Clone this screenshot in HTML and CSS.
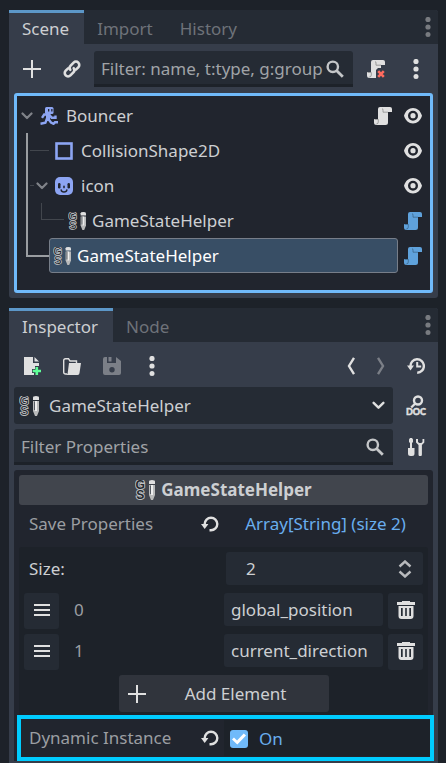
FILE: index.html
```html
<!DOCTYPE html>
<html lang="en">
<head>
<meta charset="utf-8">
<title>Scene and Inspector</title>
<link rel="stylesheet" href="styles.css">
</head>
<body>
<svg class="sprite" aria-hidden="true">
  <symbol id="plus" viewBox="0 0 18 18"><path fill="currentColor" d="M8 0h2v8h8v2h-8v8H8v-8H0V8h8z"/></symbol>
  <symbol id="link" viewBox="0 0 18 18"><g fill="none" stroke="currentColor" stroke-width="2.6" stroke-linecap="round" stroke-linejoin="round"><path d="M7.3 9.8a3.2 3.2 0 0 1 .3-4.2l3-3a3.3 3.3 0 0 1 4.7 4.7l-2.4 2.4"/><path d="M10.7 8.2a3.2 3.2 0 0 1-.3 4.2l-3 3a3.3 3.3 0 0 1-4.7-4.7l2.4-2.4"/></g></symbol>
  <symbol id="search" viewBox="0 0 18 18"><g fill="none" stroke="currentColor" stroke-width="2.4"><circle cx="6.800" cy="6.800" r="5.200"/><path stroke-width="2.8" d="m10.500 10.500 6.300 6.300"/></g></symbol>
  <symbol id="dots" viewBox="0 0 6 20"><g fill="currentColor"><circle cx="3" cy="2.500" r="2.600"/><circle cx="3" cy="10" r="2.600"/><circle cx="3" cy="17.500" r="2.500"/></g></symbol>
  <symbol id="script" viewBox="0 0 18 18"><path fill="currentColor" d="M6 0h10a2 2 0 0 1 2 2v3h-4v10.500a2.500 2.500 0 0 1-2.500 2.500H2.500A2.500 2.500 0 0 1 0 15.500V12h4V2a2 2 0 0 1 2-2z"/><path fill="none" stroke="#000" stroke-opacity=".28" stroke-width="1" d="M.5 12.500h3.800V15a2 2 0 0 1-2 2M8 1.300A2 2 0 0 1 9 3v2.200h5"/></symbol>
  <symbol id="eye" viewBox="0 0 18 18"><path fill="currentColor" fill-rule="evenodd" d="M9 1c4.200 0 7.500 2.800 9 7.700-1.500 4.900-4.800 7.700-9 7.700S1.500 13.600 0 8.700C1.500 3.800 4.800 1 9 1zM9 3.700a5 5 0 1 0 0 10 5 5 0 0 0 0-10zm0 2.400a2.600 2.600 0 1 1 0 5.200 2.600 2.600 0 0 1 0-5.200z"/></symbol>
  <symbol id="chevron" viewBox="0 0 12 8"><path fill="none" stroke="currentColor" stroke-width="2.200" stroke-linecap="round" stroke-linejoin="round" d="m1.500 1.500 4.500 4.500 4.500-4.500"/></symbol>
  <symbol id="runner" viewBox="0 0 18 18"><rect x="5" y="0" width="8.500" height="7" rx="1.500" fill="currentColor"/><path fill="#21252e" d="M8 2h1.300v2.500H8zM11.200 2h1.300v2.500h-1.300z"/><path fill="currentColor" d="M6 6.500h4.500l-.5 6-4-.5z"/><g fill="none" stroke="currentColor" stroke-width="2.400"><path d="M7 7.500H4.200L2 10.800M9.500 8l2.200 2.800h3.800V8.500"/><path d="M7 11.500l-1.600 4.300-4.900.9M8 11.500l3 4 2.500 1.300 1.500-1.500h3"/></g></symbol>
  <symbol id="face" viewBox="0 0 18 18"><rect width="18" height="18" rx="5" fill="currentColor"/><g fill="#21252e"><rect x="3" y="6" width="2.500" height="5.500" rx="1.200"/><rect x="12.500" y="6" width="2.500" height="5.500" rx="1.200"/></g><path fill="none" stroke="#21252e" stroke-width="1.600" stroke-linecap="round" d="M6.200 13c.4 2.600 5.200 2.600 5.600 0M9 9.200v1.400"/></symbol>
  <symbol id="helper" viewBox="0 0 20 20"><g fill="#24282f" stroke="#bfc0c2" stroke-width="1.800" paint-order="stroke" font-family="Liberation Sans" font-size="12"><text x=".6" y="9">G</text><text x="1.300" y="19">S</text></g><path fill="#e0e0e0" d="M14 1.500Q14 0 17 0t3 1.500V4h-6z"/><path fill="#b9babb" d="M14 5h6v10l-2 5h-2l-2-5z"/><path fill="#eee" d="M16 5h2v10h-2z"/><path fill="#555a62" d="M15 5.500h1V14h-1z"/></symbol>
  <symbol id="undo" viewBox="0 0 18 18"><path fill="none" stroke="currentColor" stroke-width="2.400" d="M3.700 10.500V9a6.300 6.300 0 1 1 6.300 6.300H8.500"/><path fill="currentColor" d="M0 9h7.400l-3.700 5z"/></symbol>
  <symbol id="history" viewBox="0 0 18 18"><path fill="none" stroke="currentColor" stroke-width="2.400" d="M3.500 9.500a6.700 6.700 0 1 1 6.700 6.200"/><path fill="currentColor" d="M0 8.500h7l-3.500 5zM9.200 5h2v3.500h3v2h-5z"/></symbol>
  <symbol id="trash" viewBox="0 0 18 18"><path fill="currentColor" fill-rule="evenodd" d="M5 0h8v1h5v3H0V1h5zM1.500 5h15v10a3 3 0 0 1-3 3h-9a3 3 0 0 1-3-3zM4 7v8h1.700V7zm4.200 0v8h1.600V7zm4.100 0v8H14V7z"/></symbol>
</svg>

<section class="dock" aria-label="Scene">
  <nav class="tabs">
    <button class="tab active">Scene</button><button class="tab">Import</button><button class="tab">History</button>
    <button class="more" aria-label="Dock options"><svg class="dots"><use href="#dots"/></svg></button>
  </nav>
  <div class="toolbar">
    <button class="tool" aria-label="Add node"><svg class="icon"><use href="#plus"/></svg></button>
    <button class="tool" aria-label="Instance scene"><svg class="icon"><use href="#link"/></svg></button>
    <label class="field"><input type="text" aria-label="Filter nodes" placeholder="Filter: name, t:type, g:group"><svg class="icon"><use href="#search"/></svg></label>
    <button class="tool detach" aria-label="Detach script"><svg class="icon" viewBox="0 0 18 18"><path fill="#e0e0e0" d="M6 0h10a2 2 0 0 1 2 2v3h-4v3h-3l-2 2v8H2.500A2.500 2.500 0 0 1 0 15.500V12h4V2a2 2 0 0 1 2-2z"/><path fill="none" stroke="#999" d="M.5 12.500h3.800V15a2 2 0 0 1-2 2M8 1.300A2 2 0 0 1 9 3v2.200h5"/><path stroke="#ff6b5f" stroke-width="2.600" d="m11.200 11.200 5.600 5.600m0-5.600-5.600 5.600"/></svg></button>
    <button class="tool last" aria-label="More"><svg class="dots"><use href="#dots"/></svg></button>
  </div>
  <div class="tree" role="tree">
    <div class="row" role="treeitem">
      <span class="fold root"><svg class="chev"><use href="#chevron"/></svg></span><svg class="icon blue"><use href="#runner"/></svg><span class="name">Bouncer</span>
      <svg class="icon"><use href="#script"/></svg><svg class="icon"><use href="#eye"/></svg>
    </div>
    <div class="row" role="treeitem">
      <span class="trunk"></span><span class="branch"></span>
      <svg class="icon blue" viewBox="0 0 18 18"><rect x="1.500" y="1.500" width="15" height="15" fill="none" stroke="currentColor" stroke-width="2.600"/></svg><span class="name">CollisionShape2D</span>
      <svg class="icon"><use href="#eye"/></svg>
    </div>
    <div class="row" role="treeitem">
      <span class="trunk"></span><span class="branch short"></span><span class="fold"><svg class="chev"><use href="#chevron"/></svg></span>
      <svg class="icon blue"><use href="#face"/></svg><span class="name">icon</span>
      <svg class="icon"><use href="#eye"/></svg>
    </div>
    <div class="row" role="treeitem">
      <span class="trunk"></span><span class="elbow thin"></span>
      <svg class="icon"><use href="#helper"/></svg><span class="name close">GameStateHelper</span>
      <svg class="icon sky"><use href="#script"/></svg>
    </div>
    <div class="row" role="treeitem" aria-selected="true">
      <span class="elbow"></span>
      <span class="selected"><svg class="icon"><use href="#helper"/></svg><span class="name close">GameStateHelper</span></span>
      <svg class="icon sky"><use href="#script"/></svg>
    </div>
  </div>
</section>

<section class="dock inspector" aria-label="Inspector">
  <nav class="tabs">
    <button class="tab active">Inspector</button><button class="tab">Node</button>
    <button class="more" aria-label="Dock options"><svg class="dots"><use href="#dots"/></svg></button>
  </nav>
  <div class="toolbar resources">
    <button class="tool" aria-label="New resource"><svg class="icon" viewBox="0 0 18 18"><path fill="#e0e0e0" d="M1 0h9v6h6v3h-4v3H9v4h2v2H1zM11.500 0 16 4.500h-4.500z"/><path fill="#5fff97" d="M12.500 10h2.600v2.700H18v2.600h-2.900V18h-2.600v-2.700H9.700v-2.600h2.800z"/></svg></button>
    <button class="tool" aria-label="Open resource"><svg class="icon" viewBox="0 0 18 18"><path fill="none" stroke="#e0e0e0" stroke-width="1.400" d="M4 17H2.500A1.800 1.800 0 0 1 .7 15.200V3.500A1.800 1.800 0 0 1 2.500 1.700h3L7 4h6.500v3"/><path fill="#e0e0e0" d="M6 6h12l-1.500 10a2 2 0 0 1-2 2H2.500c1.300 0 2-.7 2.200-2z"/></svg></button>
    <button class="tool dim" aria-label="Save resource"><svg class="icon" viewBox="0 0 18 18"><path fill="currentColor" fill-rule="evenodd" d="M2 0h2v6h9V0l5 4v12a2 2 0 0 1-2 2H2a2 2 0 0 1-2-2V2a2 2 0 0 1 2-2zM9 10a2.700 2.700 0 1 0 0 5.400A2.700 2.700 0 0 0 9 10zM5.500 0h3v4.500h-3z"/></svg></button>
    <button class="tool menu" aria-label="Resource options"><svg class="dots"><use href="#dots"/></svg></button>
    <span class="spacer"></span>
    <button class="tool step" aria-label="Previous object"><svg class="angle" viewBox="0 0 8 18"><path fill="none" stroke="currentColor" stroke-width="2.400" d="M7 .8 2 9l5 8.200"/></svg></button>
    <button class="tool step dim" aria-label="Next object"><svg class="angle" viewBox="0 0 8 18"><path fill="none" stroke="currentColor" stroke-width="2.400" d="m1 .8 5 8.200-5 8.200"/></svg></button>
    <button class="tool last" aria-label="History"><svg class="icon"><use href="#history"/></svg></button>
  </div>
  <div class="line">
    <label class="field combo"><svg class="helper"><use href="#helper"/></svg><select aria-label="Edited object"><option>GameStateHelper</option></select><svg class="chev wide"><use href="#chevron"/></svg></label>
    <button class="tool side" aria-label="Open documentation"><svg class="doc" viewBox="0 0 24 22"><g fill="none" stroke="#e0e0e0" stroke-width="2.400"><circle cx="14" cy="5.500" r="4"/><path d="m11.200 8.500-4 4"/></g><text x="12" y="20" text-anchor="middle" font-family="Lato" font-weight="900" font-size="9" fill="#e0e0e0" stroke="#e0e0e0" stroke-width=".4">DOC</text></svg></button>
  </div>
  <div class="line">
    <label class="field"><input type="text" aria-label="Filter properties" placeholder="Filter Properties"><svg class="icon"><use href="#search"/></svg></label>
    <button class="tool side" aria-label="Tools"><svg class="icon" viewBox="0 0 18 18"><path fill="#e0e0e0" d="M3 0h2l1 1.500V4L5 5v5h2.500v5.500A2.500 2.500 0 0 1 5 18H3.500A2.500 2.500 0 0 1 1 15.500V10h2V5L2 4V1.500zM9 1v3.500L11.500 7v9.500a1.700 1.700 0 0 0 3.400 0V7l2.400-2.500V1h-1.800v3L14.300 5h-2L11 4V1z"/></svg></button>
  </div>
  <div class="properties">
    <h2 class="category"><svg class="helper"><use href="#helper"/></svg>GameStateHelper</h2>
    <div class="property">
      <span class="label">Save Properties</span><button class="tool revert" aria-label="Revert save properties"><svg class="icon"><use href="#undo"/></svg></button>
      <button class="array">Array[String] (size 2)</button>
    </div>
    <div class="editor">
      <div class="size">
        <label for="size">Size:</label>
        <div class="spin"><input id="size" type="text" inputmode="numeric" value="2"><svg class="updown" viewBox="0 0 14 18"><path fill="none" stroke="currentColor" stroke-width="2.400" d="m1.500 6.500 5.500-5 5.500 5m-11 5 5.500 5 5.500-5"/></svg></div>
      </div>
      <div class="item">
        <button class="square" aria-label="Move item 0"><svg class="bars" viewBox="0 0 16 12"><path fill="#e0e0e0" d="M0 0h16v2H0zm0 5h16v2H0zm0 5h16v2H0z"/></svg></button><label class="index" for="v0">0</label>
        <input class="value" id="v0" type="text" value="global_position"><button class="square" aria-label="Remove item 0"><svg class="icon"><use href="#trash"/></svg></button>
      </div>
      <div class="item">
        <button class="square" aria-label="Move item 1"><svg class="bars" viewBox="0 0 16 12"><path fill="#e0e0e0" d="M0 0h16v2H0zm0 5h16v2H0zm0 5h16v2H0z"/></svg></button><label class="index" for="v1">1</label>
        <input class="value" id="v1" type="text" value="current_direction"><button class="square" aria-label="Remove item 1"><svg class="icon"><use href="#trash"/></svg></button>
      </div>
      <button class="add"><svg class="icon"><use href="#plus"/></svg><span>Add Element</span></button>
    </div>
    <div class="property highlight">
      <span class="label">Dynamic Instance</span><button class="tool revert" aria-label="Revert dynamic instance"><svg class="icon"><use href="#undo"/></svg></button>
      <label class="toggle"><input type="checkbox" checked>On</label>
    </div>
  </div>
</section>
</body>
</html>
```
FILE: styles.css
```css
* { box-sizing: border-box; }

body {
  margin: 0;
  min-height: 100vh;
  padding: 10px 8px 0 9px;
  display: flex;
  flex-direction: column;
  gap: 10px;
  background: #1d2229;
  color: #cdcfd2;
  font: 17px/24px "Noto Sans", sans-serif;
}

button, input, select {
  margin: 0;
  padding: 0;
  border: 0;
  border-radius: 0;
  background: none;
  color: inherit;
  font: inherit;
  min-width: 0;
}

svg { display: block; flex: none; }
.sprite { display: none; }
.icon { width: 18px; height: 18px; color: #e0e0e0; }
.helper { width: 20px; height: 20px; }
.dots { width: 6px; height: 20px; }
.chev { width: 12px; height: 8px; color: #808389; }
.blue { color: #8da5f3; }
.sky { color: #5fa2dc; }

.dock {
  border-radius: 3px;
  background: #363d4a;
}

.tabs {
  display: flex;
  height: 34px;
  background: #252b34;
  border-radius: 3px 3px 0 0;
}

.tab {
  padding: 0 14px 0 13px;
  border-top: 3px solid transparent;
  color: #6e7279;
}

.tab.active {
  padding-right: 15px;
  border-top-color: #5c97c8;
  background: #363d4a;
  color: #cdcfd2;
}

.more { margin-left: auto; padding: 0 7px; color: #787b80; }

.toolbar {
  display: flex;
  align-items: center;
  height: 49px;
  padding: 0 5px 0 14px;
}

.tool {
  display: flex;
  align-items: center;
  margin-right: 22px;
  color: #e0e0e0;
}

.tool + .field { margin-left: -9px; }
.tool.last { width: 34px; margin: 0; justify-content: center; }
.tool.detach { margin: 0 14px 0 14px; }
.tool.menu { margin-left: 6px; }
.dim { color: #7b7f87; }
.dim .icon { color: inherit; }

.field {
  display: flex;
  align-items: center;
  flex: 1;
  min-width: 0;
  height: 36px;
  padding: 0 9px 0 7px;
  border-radius: 3px 3px 0 0;
  background: #252b34;
  box-shadow: inset 0 -3px #1d2229;
}

.field input { flex: 1; }
.field input::placeholder { color: #a0a3a7; opacity: 1; }
.field .icon { color: #c4c6c8; }

.tree {
  margin: 0 5px;
  height: 200px;
  padding: 2px 8px 0 7px;
  border: 3px solid #70bafa;
  border-radius: 3px;
  background: #21252e;
}

.dock:first-of-type { padding-bottom: 5px; }

.row {
  display: flex;
  align-items: center;
  height: 35px;
}

.name { flex: 1; margin-left: 8px; }
.name.close { margin-left: 6px; }
.row > .name ~ .icon { margin-left: 12px; }
.fold { width: 14px; margin-right: 5px; }
.fold.root { width: 19px; margin: 0 0 0 -3px; }
.trunk { width: 2px; height: 35px; margin: 0 2px; background: #9a9da1; }
.branch { width: 19px; height: 1px; margin-right: 6px; background: #42464d; }
.branch.short { width: 4px; margin-right: 2px; }

.elbow {
  align-self: flex-start;
  width: 23px;
  height: 19px;
  margin-left: 2px;
  border: solid #9a9da1;
  border-width: 0 0 2px 2px;
}

.elbow.thin {
  width: 23px;
  height: 17px;
  margin: 0 4px 0 11px;
  border: solid #42464d;
  border-width: 0 0 1px 1px;
}

.selected {
  display: flex;
  align-items: center;
  flex: 1;
  height: 35px;
  margin-right: 6px;
  padding-left: 3px;
  border: 1px solid #777e89;
  border-radius: 3px;
  background: #384e65;
  color: #fff;
}

.inspector { flex: 1; border-radius: 3px 3px 0 0; }
.resources { height: 45px; padding-top: 3px; }
.spacer { flex: 1; }
.tool.step { margin-right: 22px; }
.tool.step.dim { margin-right: 14px; }
.angle { width: 8px; height: 18px; }

.line {
  display: flex;
  align-items: center;
  padding: 0 5px;
  margin-bottom: 5px;
}

.tool.side { width: 40px; margin: 0; padding-left: 5px; justify-content: center; }
.doc { width: 24px; height: 22px; }

.combo { height: 37px; padding: 0 8px 0 5px; border-radius: 3px; box-shadow: none; }
.combo select { flex: 1; margin-left: 10px; appearance: none; }
.chev.wide { width: 13px; height: 9px; color: #e0e0e0; }

.properties {
  margin: 0 5px;
  padding: 5px 5px 0;
  border-radius: 3px 3px 0 0;
  background: #21252e;
}

.category {
  display: flex;
  align-items: center;
  justify-content: center;
  gap: 6px;
  height: 30px;
  margin: 0;
  border-radius: 3px;
  background: #41454d;
  font-size: 17px;
  font-weight: bold;
}

.property {
  display: grid;
  grid-template-columns: 182px 22px 1fr;
  align-items: center;
  height: 42px;
  padding-bottom: 4px;
}

.label { padding-left: 10px; color: #9b9ea2; white-space: nowrap; }
.tool.revert { margin: 0; }
.array { color: #69aeee; }

.editor { padding: 5px; background: #1d2229; border-radius: 3px; }

.size { display: flex; align-items: center; height: 33px; margin-bottom: 8px; }
.size label { width: 202px; padding-left: 5px; }

.spin {
  display: flex;
  align-items: center;
  flex: 1;
  min-width: 0;
  height: 33px;
  padding: 0 11px 0 20px;
  border-radius: 3px;
  background: #252b34;
}

.spin input { flex: 1; }
.updown { width: 14px; height: 18px; color: #b8babd; }

.item { display: flex; align-items: flex-start; height: 36px; margin-bottom: 5px; }

.square {
  display: flex;
  align-items: center;
  justify-content: center;
  width: 35px;
  height: 36px;
  padding-bottom: 2px;
  border-radius: 3px;
  background: #252b34;
}

.bars { width: 16px; height: 12px; }
.index { width: 165px; padding: 5px 0 0 15px; color: #9b9ea2; }
.value { flex: 1; height: 33px; margin-right: 5px; padding: 0 7px; border-radius: 3px; background: #252b34; }

.add {
  display: flex;
  align-items: center;
  width: 210px;
  height: 37px;
  margin: 0 auto;
  padding: 0 9px;
  border-radius: 3px;
  background: #30343c;
}

.add span { flex: 1; padding-left: 6px; }

.highlight {
  height: 46px;
  margin: -2px -6px 2px -2px;
  padding: 0;
  border: 4px solid #00ccff;
  grid-template-columns: 180px 23px 1fr;
}

.highlight .label { padding-left: 8px; }

.toggle {
  display: flex;
  align-items: center;
  gap: 11px;
  height: 36px;
  padding: 2px 0 0 6px;
  background: #1d2229;
  color: #69aeee;
}

.toggle input {
  display: grid;
  place-items: center;
  width: 18px;
  height: 18px;
  border-radius: 3px;
  background: #70bafa;
  appearance: none;
}

.toggle input:checked::before {
  content: "";
  width: 14px;
  height: 12px;
  background: #fff;
  clip-path: polygon(0 55%, 14% 38%, 36% 62%, 84% 4%, 100% 20%, 38% 96%);
}
```
